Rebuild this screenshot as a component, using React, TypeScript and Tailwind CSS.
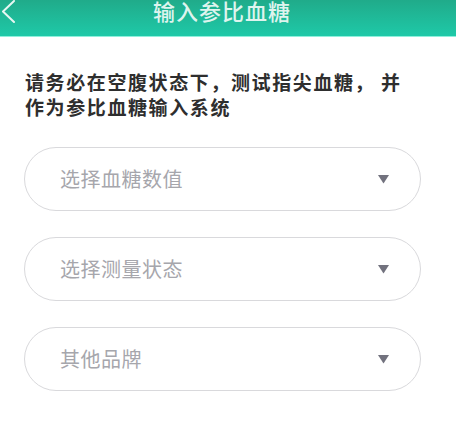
const cjk = "font-['Noto_Sans_CJK_SC','Noto_Sans',sans-serif]";

interface PickerProps {
  placeholder: string;
}

function Picker({ placeholder }: PickerProps) {
  return (
    <button className="w-full h-[64px] rounded-full border border-[#d9d9dc] bg-white flex items-center pl-[35px] pr-[31px]">
      <span className="text-[20px] leading-none text-[#a6a6ac] tracking-[0.5px]">{placeholder}</span>
      <svg className="ml-auto" width="11" height="9" viewBox="0 0 11 9">
        <polygon points="0,0 11,0 5.5,8.5" fill="#72727e" />
      </svg>
    </button>
  );
}

export default function App() {
  return (
    <div className={`w-[456px] h-[448px] bg-white overflow-hidden ${cjk}`}>
      <header className="relative h-[37px] bg-gradient-to-b from-[#20ab8a] to-[#1ec9a8] border-b border-[#8ef0dc] flex justify-center">
        <button className="absolute left-0 top-0 text-[#e6f7f2]">
          <svg width="18" height="24" viewBox="0 0 18 24" fill="none" stroke="currentColor" strokeWidth="2" strokeLinecap="round" strokeLinejoin="round">
            <polyline points="14,1 3,11.5 14,22" />
          </svg>
        </button>
        <h1 className="-mt-[2px] mr-[12px] text-[22px] leading-[24px] tracking-[1px] font-medium text-[#def4ee]">
          输入参比血糖
        </h1>
      </header>

      <p className="px-[25px] pt-[32px] text-[19px] leading-[25px] tracking-[1.6px] font-semibold text-[#2e2e2e]">
        请务必在空腹状态下，测试指尖血糖， 并
        <br />
        作为参比血糖输入系统
      </p>

      <div className="px-[24px] pt-[28px] pr-[35px] flex flex-col gap-[26px]">
        <Picker placeholder="选择血糖数值" />
        <Picker placeholder="选择测量状态" />
        <Picker placeholder="其他品牌" />
      </div>
    </div>
  );
}
